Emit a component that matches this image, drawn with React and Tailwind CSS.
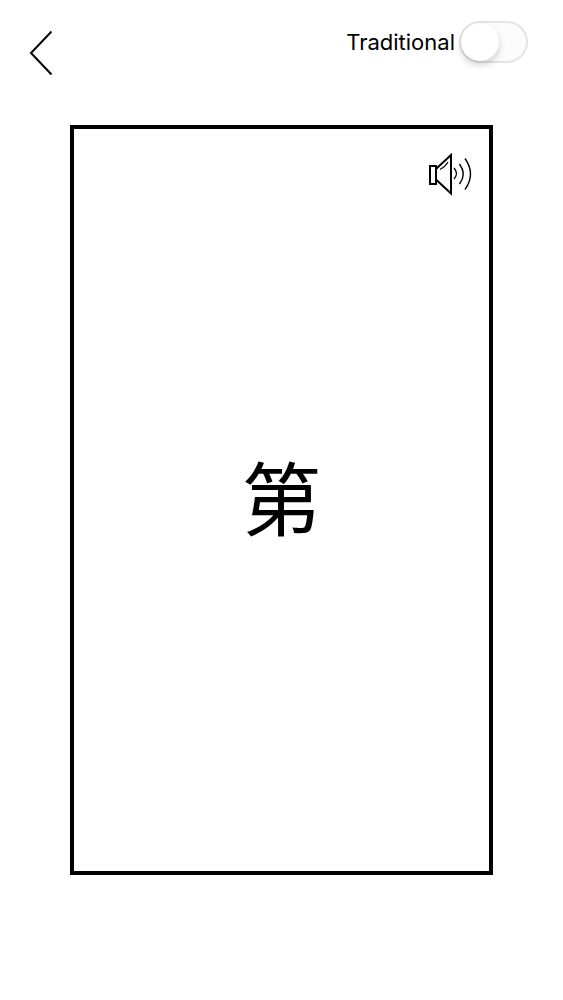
import { useState } from "react";

const CARD = { simplified: "第", traditional: "第" };

function BackIcon() {
  return (
    <svg width="24" height="46" viewBox="0 0 24 46" fill="none" stroke="currentColor" strokeWidth="2">
      <path d="M22.5 1.5 L2 23 L22.5 44.5" />
    </svg>
  );
}

function SpeakerIcon() {
  return (
    <svg width="44" height="44" viewBox="0 0 44 44" fill="none" stroke="currentColor" strokeWidth="2">
      <rect x="1" y="13" width="6" height="18" />
      <path d="M7.5 15.5 L22 2 V40.5 L7.5 27" />
      <path d="M11 16.5 Q16.5 13.5 19 9" strokeWidth="1.2" />
      <path d="M25 15 Q30 20.5 25 26" strokeWidth="1.4" />
      <path d="M30.5 11 Q38 21 30.5 31" strokeWidth="1.4" />
      <path d="M36 5.5 Q47 21 36 36.5" strokeWidth="1.4" />
    </svg>
  );
}

export default function App() {
  const [traditional, setTraditional] = useState(false);

  return (
    <div className="min-h-screen bg-white text-black font-['Inter','Noto_Sans_CJK_SC',sans-serif]">
      {/* Header */}
      <header className="flex items-start justify-between h-[125px] pl-[29px] pr-[35px] pt-[21px]">
        <button type="button" aria-label="Back" className="mt-[9px]">
          <BackIcon />
        </button>

        <div className="flex items-center gap-1">
          <label htmlFor="traditional" className="text-[22px] leading-7">
            Traditional
          </label>
          <input
            id="traditional"
            type="checkbox"
            role="switch"
            checked={traditional}
            onChange={(e) => setTraditional(e.target.checked)}
            className="appearance-none w-[69px] h-[42px] rounded-full border-2 border-[#e5e3e5] bg-[#fdfcfd] checked:bg-green-500 before:block before:size-[38px] before:rounded-full before:bg-white before:shadow-[0_4px_7px_rgba(0,0,0,0.18)] checked:before:ml-[27px]"
          />
        </div>
      </header>

      {/* Flashcard */}
      <main className="relative flex items-center justify-center w-3/4 h-[75vh] mx-auto border-4 border-black">
        <button type="button" aria-label="Play pronunciation" className="absolute top-6 right-4">
          <SpeakerIcon />
        </button>
        <p lang="zh" className="text-[80px] leading-none">
          {traditional ? CARD.traditional : CARD.simplified}
        </p>
      </main>
    </div>
  );
}
